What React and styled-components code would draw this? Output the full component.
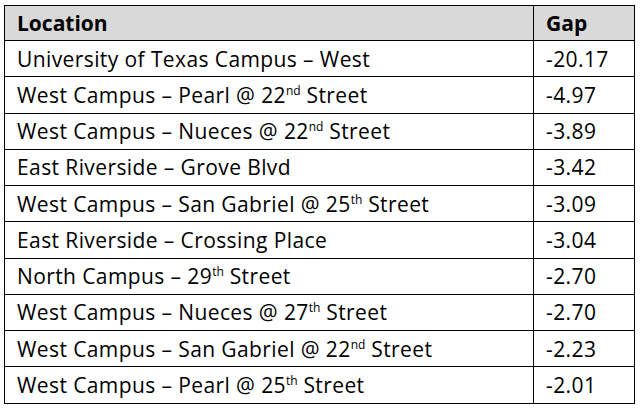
import React from "react";
import styled, { createGlobalStyle } from "styled-components";

const Global = createGlobalStyle`
  html, body { margin: 0; padding: 0; background: #ffffff; }
  body { font-family: "Open Sans", "Noto Sans", sans-serif; }
`;

const Page = styled.div`
  padding: 5px 0 0 4px;
`;

const Table = styled.table`
  border-collapse: collapse;
  width: 631px;
  table-layout: fixed;
  color: #000;
  font-size: 21px;
`;

const HeadCell = styled.th`
  background: #d9d9d9;
  border: 1px solid #000;
  height: 34px;
  padding: 0 0 0 12px;
  text-align: left;
  font-weight: 700;
  vertical-align: middle;
`;

const Cell = styled.td`
  border: 1px solid #000;
  height: 35.25px;
  padding: 0 0 0 12px;
  vertical-align: middle;
  white-space: nowrap;
  letter-spacing: 0.4px;
`;

const Sup = styled.sup`
  font-size: 12px;
  vertical-align: 8px;
  line-height: 0;
  letter-spacing: 0;
`;

const rows = [
  ["University of Texas Campus – West", null, "", "-20.17"],
  ["West Campus – Pearl @ 22", "nd", " Street", "-4.97"],
  ["West Campus – Nueces @ 22", "nd", " Street", "-3.89"],
  ["East Riverside – Grove Blvd", null, "", "-3.42"],
  ["West Campus – San Gabriel @ 25", "th", " Street", "-3.09"],
  ["East Riverside – Crossing Place", null, "", "-3.04"],
  ["North Campus – 29", "th", " Street", "-2.70"],
  ["West Campus – Nueces @ 27", "th", " Street", "-2.70"],
  ["West Campus – San Gabriel @ 22", "nd", " Street", "-2.23"],
  ["West Campus – Pearl @ 25", "th", " Street", "-2.01"],
];

export default function App() {
  return (
    <>
      <Global />
      <Page>
        <Table>
          <colgroup>
            <col style={{ width: 529 }} />
            <col />
          </colgroup>
          <thead>
            <tr>
              <HeadCell>Location</HeadCell>
              <HeadCell>Gap</HeadCell>
            </tr>
          </thead>
          <tbody>
            {rows.map(([a, s, b, gap], i) => (
              <tr key={i}>
                <Cell>
                  {a}
                  {s && <Sup>{s}</Sup>}
                  {b}
                </Cell>
                <Cell>{gap}</Cell>
              </tr>
            ))}
          </tbody>
        </Table>
      </Page>
    </>
  );
}
